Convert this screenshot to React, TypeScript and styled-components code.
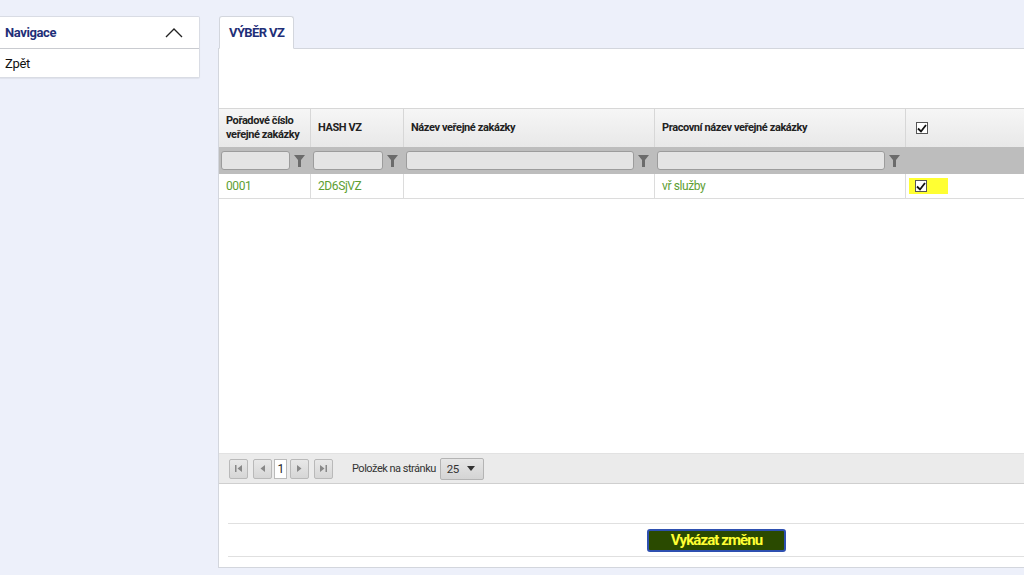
import React from "react";
import styled, { createGlobalStyle } from "styled-components";

const Global = createGlobalStyle`
  html, body { margin: 0; padding: 0; background: #edf0fa; overflow: hidden; }
  body { font-family: "Roboto", "Liberation Sans", sans-serif; }
  * { box-sizing: border-box; }
`;

const Page = styled.div`
  display: flex;
  align-items: flex-start;
  gap: 18px;
  padding-top: 16px;
  width: 1060px;
  height: 575px;
`;

const Nav = styled.div`
  width: 200px;
  background: #fff;
  border: 1px solid #d9dce4;
  border-left: none;
  border-radius: 0 2px 2px 0;
  box-shadow: 0 1px 1px rgba(0,0,0,0.06);
`;

const NavHeader = styled.div`
  height: 32px;
  display: flex;
  align-items: center;
  justify-content: space-between;
  padding: 0 16px 0 5px;
  border-bottom: 1px solid #c9cbd0;
  font-size: 13px;
  font-weight: bold;
  letter-spacing: -0.4px;
  color: #1f2f78;
`;

const NavItem = styled.div`
  height: 28px;
  display: flex;
  align-items: center;
  padding-left: 5px;
  font-size: 13px;
  letter-spacing: -0.3px;
  color: #111;
`;

const Main = styled.div`
  flex: 1;
  display: flex;
  flex-direction: column;
`;

const Tabs = styled.div`
  display: flex;
  padding-left: 1px;
  margin-bottom: -1px;
`;

const Tab = styled.div`
  height: 33px;
  padding: 0 9px;
  display: flex;
  align-items: center;
  background: #fff;
  border: 1px solid #d3d6dd;
  border-bottom: 1px solid #fff;
  border-radius: 3px 3px 0 0;
  font-size: 13px;
  font-weight: bold;
  letter-spacing: -0.6px;
  color: #1f2f78;
  position: relative;
  z-index: 1;
`;

const Panel = styled.div`
  background: #fff;
  border: 1px solid #d3d6dd;
  border-right: none;
  height: 520px;
  display: flex;
  flex-direction: column;
  padding-top: 59px;
`;

const Grid = styled.div`
  display: grid;
  grid-template-columns: 92px 93px 251px 251px 1fr;
`;

const HeadCell = styled.div<{ $pl?: number }>`
  height: 39px;
  border-top: 1px solid #d7d7d7;
  border-right: 1px solid #d7d7d7;
  background: linear-gradient(#f6f6f6, #e8e8e8);
  display: flex;
  align-items: center;
  padding: 0 6px 0 ${(p) => p.$pl ?? 7}px;
  font-size: 11px;
  font-weight: bold;
  letter-spacing: -0.4px;
  line-height: 14px;
  color: #222;
`;

const FilterCell = styled.div`
  height: 27px;
  background: #bdbdbd;
  display: flex;
  align-items: center;
  padding: 0 6px 0 2px;
  gap: 4px;
`;

const FilterInput = styled.div`
  flex: 1;
  height: 19px;
  background: #e4e4e4;
  border: 1px solid #9c9c9c;
  border-radius: 3px;
`;

const DataCell = styled.div<{ $pl?: number }>`
  height: 25px;
  border-right: 1px solid #dcdcdc;
  border-bottom: 1px solid #dcdcdc;
  display: flex;
  align-items: center;
  padding: 0 7px 0 ${(p) => p.$pl ?? 7}px;
  font-size: 12px;
  letter-spacing: -0.4px;
  color: #5d9e32;
`;

const Highlight = styled.div`
  background: #ffff33;
  height: 16px;
  width: 39px;
  margin-left: -5px;
  display: flex;
  align-items: center;
  padding-left: 6px;
`;

const Box = styled.span`
  width: 12px;
  height: 12px;
  border: 1px solid #555;
  background: #fff;
  display: inline-flex;
  align-items: center;
  justify-content: center;
`;

const Spacer = styled.div`
  height: 254px;
`;

const Pager = styled.div`
  height: 31px;
  background: #ebebeb;
  border-top: 1px solid #e2e2e2;
  border-bottom: 1px solid #cfcfcf;
  display: flex;
  align-items: center;
  padding-left: 10px;
  font-size: 11px;
  letter-spacing: -0.5px;
  color: #333;
`;

const PgBtn = styled.div<{ $mr?: number }>`
  width: 19px;
  height: 20px;
  border: 1px solid #b9b9b9;
  border-radius: 2px;
  background: linear-gradient(#e8e8e8, #d6d6d6);
  display: flex;
  align-items: center;
  justify-content: center;
  margin-right: ${(p) => p.$mr ?? 2}px;
`;

const PageNum = styled.div`
  width: 13px;
  height: 20px;
  background: #fff;
  border: 1px solid #bbb;
  display: flex;
  align-items: center;
  justify-content: center;
  margin-right: 3px;
  font-size: 12px;
  color: #222;
`;

const PgLabel = styled.span`
  margin-left: 19px;
  margin-right: 4px;
`;

const Select = styled.div`
  width: 44px;
  height: 22px;
  border: 1px solid #b4b4b4;
  border-radius: 2px;
  background: linear-gradient(#e6e6e6, #d4d4d4);
  display: flex;
  align-items: center;
  justify-content: space-between;
  padding: 0 8px 0 6px;
  font-size: 11.5px;
`;

const Footer = styled.div`
  margin: 39px 0 0 9px;
  border-top: 1px solid #e0e0e0;
  border-bottom: 1px solid #e0e0e0;
  height: 34px;
  display: flex;
  align-items: center;
  padding-left: 419px;
`;

const ActionBtn = styled.div`
  width: 139px;
  height: 23px;
  background: #2a4a00;
  border: 2px solid #2e50b0;
  border-radius: 3px;
  color: #ffff33;
  font-size: 15px;
  font-weight: bold;
  letter-spacing: -0.9px;
  display: flex;
  align-items: center;
  justify-content: center;
`;

const Funnel = () => (
  <svg width="11" height="14" viewBox="0 0 11 14">
    <path d="M0 1 H11 L7 6 V13 H4 V6 Z" fill="#6b6b6b" />
  </svg>
);

const Check = () => (
  <svg width="10" height="9" viewBox="0 0 10 9">
    <path d="M1 4.5 L4 7.5 L9 1" stroke="#111" strokeWidth="1.8" fill="none" />
  </svg>
);

const Tri = ({ d }: { d: string }) => (
  <svg width="9" height="9" viewBox="0 0 9 9">
    <path d={d} fill="#888" />
  </svg>
);

export default function App() {
  return (
    <>
      <Global />
      <Page>
        <Nav>
          <NavHeader>
            <span>Navigace</span>
            <svg width="18" height="11" viewBox="0 0 18 11">
              <path d="M1 10 L9 2 L17 10" stroke="#222" strokeWidth="1.3" fill="none" />
            </svg>
          </NavHeader>
          <NavItem>Zpět</NavItem>
        </Nav>
        <Main>
          <Tabs>
            <Tab>VÝBĚR VZ</Tab>
          </Tabs>
          <Panel>
            <Grid>
              <HeadCell>Pořadové číslo veřejné zakázky</HeadCell>
              <HeadCell>HASH VZ</HeadCell>
              <HeadCell>Název veřejné zakázky</HeadCell>
              <HeadCell>Pracovní název veřejné zakázky</HeadCell>
              <HeadCell $pl={10}>
                <Box><Check /></Box>
              </HeadCell>
              {[0, 1, 2, 3].map((i) => (
                <FilterCell key={i}>
                  <FilterInput />
                  <Funnel />
                </FilterCell>
              ))}
              <FilterCell />
              <DataCell>0001</DataCell>
              <DataCell>2D6SjVZ</DataCell>
              <DataCell />
              <DataCell>vř služby</DataCell>
              <DataCell $pl={8}>
                <Highlight>
                  <Box><Check /></Box>
                </Highlight>
              </DataCell>
            </Grid>
            <Spacer />
            <Pager>
              <PgBtn $mr={5}><Tri d="M1 1 H2.5 V8 H1 Z M8 1 V8 L3.5 4.5 Z" /></PgBtn>
              <PgBtn $mr={2}><Tri d="M7 1 V8 L2.5 4.5 Z" /></PgBtn>
              <PageNum>1</PageNum>
              <PgBtn $mr={5}><Tri d="M2 1 V8 L6.5 4.5 Z" /></PgBtn>
              <PgBtn $mr={0}><Tri d="M1 1 V8 L5.5 4.5 Z M6.5 1 H8 V8 H6.5 Z" /></PgBtn>
              <PgLabel>Položek na stránku</PgLabel>
              <Select>
                <span>25</span>
                <svg width="8" height="5" viewBox="0 0 8 5"><path d="M0 0 H8 L4 5 Z" fill="#333" /></svg>
              </Select>
            </Pager>
            <Footer>
              <ActionBtn>Vykázat změnu</ActionBtn>
            </Footer>
          </Panel>
        </Main>
      </Page>
    </>
  );
}
